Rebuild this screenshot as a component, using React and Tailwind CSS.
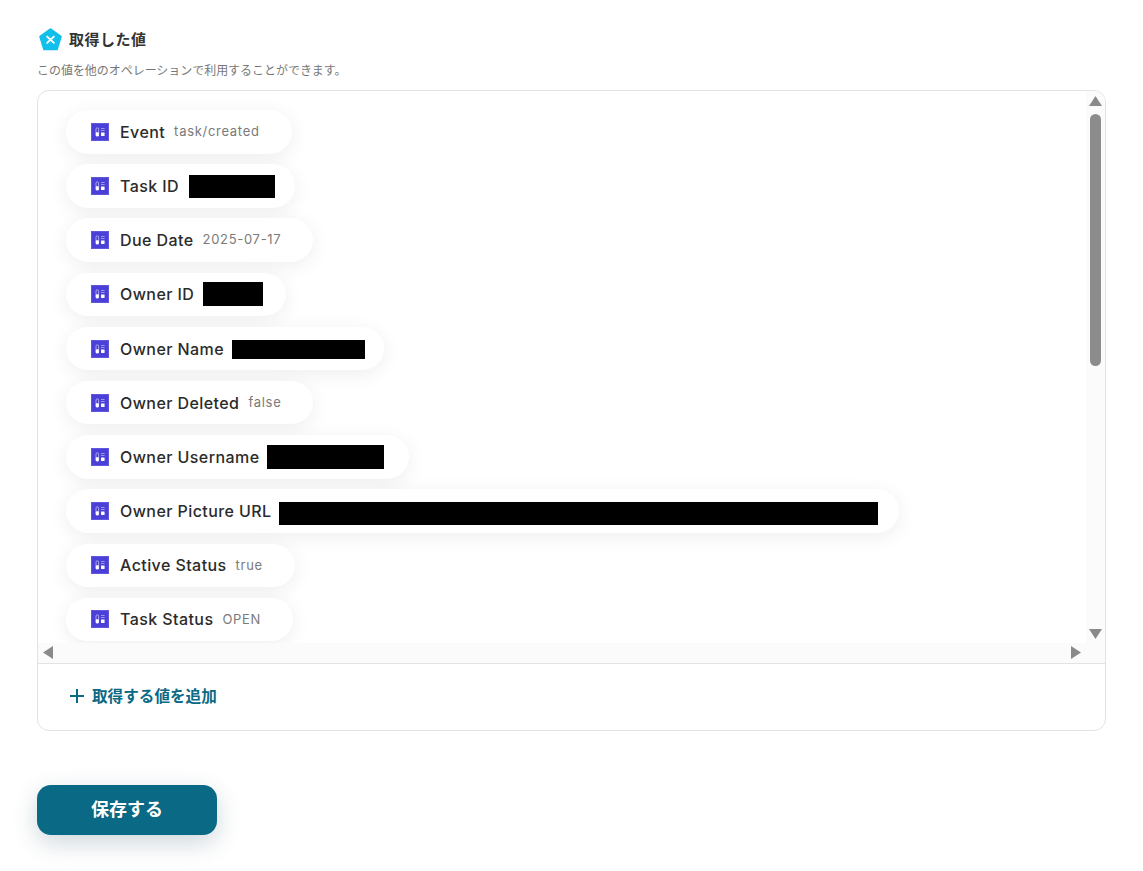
import React from 'react';

const rows = [
  { label: 'Event', value: 'task/created' },
  { label: 'Task ID', box: 'h-[23px] w-[86px] ml-[10px] mr-[20px] mt-[1px]' },
  { label: 'Due Date', value: '2025-07-17' },
  { label: 'Owner ID', box: 'h-[24px] w-[60px] ml-[9px] mr-[23px]' },
  { label: 'Owner Name', box: 'h-[19px] w-[133px] ml-[8px] mr-[19px] mt-[2px]' },
  { label: 'Owner Deleted', value: 'false' },
  { label: 'Owner Username', box: 'h-[24px] w-[117px] ml-[8px] mr-[25px]' },
  { label: 'Owner Picture URL', box: 'h-[23px] w-[599px] ml-[7px] mr-[21px] mt-[4px]' },
  { label: 'Active Status', value: 'true' },
  { label: 'Task Status', value: 'OPEN' },
];

// small indigo app icon used on every pill
function AppIcon() {
  return (
    <svg width="18" height="18" viewBox="0 0 18 18" className="shrink-0">
      <rect x="0.5" y="0.5" width="17" height="17" fill="#4A40D8" stroke="#6258E0" />
      <rect x="5" y="4.8" width="2.6" height="8.4" rx="1.3" fill="none" stroke="#fff" strokeWidth="0.7" opacity="0.7" />
      <rect x="4.8" y="9.2" width="3" height="4" rx="0.8" fill="#fff" />
      <rect x="10" y="5" width="3.6" height="0.9" fill="#fff" opacity="0.5" />
      <rect x="10" y="7" width="3.6" height="0.9" fill="#fff" opacity="0.5" />
      <rect x="10" y="9.4" width="3.6" height="3.6" rx="0.4" fill="#fff" />
    </svg>
  );
}

function Pill({ row }) {
  return (
    <div className="flex h-[43.5px] w-fit items-center rounded-full bg-white pl-[25px] shadow-[0_4px_20px_rgba(0,0,0,0.07)]">
      <AppIcon />
      <span className="ml-[11px] text-[16px] font-[550] tracking-[0.42px] text-[#2b2b2b]">{row.label}</span>
      {row.box ? (
        <span className={`bg-black ${row.box}`} />
      ) : (
        <span className="ml-[9px] mr-[32px] text-[13px] tracking-[0.7px] text-[#7a7a7a]">{row.value}</span>
      )}
    </div>
  );
}

function Arrow({ dir }) {
  const points = {
    up: '6.5,0 13,10 0,10',
    down: '0,0 13,0 6.5,10',
    left: '10,0 10,13 0,6.5',
    right: '0,0 10,6.5 0,13',
  };
  const size = dir === 'up' || dir === 'down' ? 'h-[10px] w-[13px]' : 'h-[13px] w-[10px]';
  const box = dir === 'up' || dir === 'down' ? '0 0 13 10' : '0 0 10 13';
  return (
    <svg viewBox={box} className={`${size} shrink-0`}>
      <polygon points={points[dir]} fill="#8a8a8a" />
    </svg>
  );
}

export default function App() {
  return (
    <div className="min-h-[871px] bg-white pl-[37px] pr-[37px] pt-[28px] font-['Inter','Noto_Sans_CJK_JP',sans-serif]">
      <div className="flex items-center">
        <svg width="23" height="23" viewBox="0 0 24 24" className="ml-[2px]">
          <path d="M12 1.5 L22.5 9 L18.5 22 L5.5 22 L1.5 9 Z" fill="#10BFEA" stroke="#10BFEA" strokeWidth="2.5" strokeLinejoin="round" />
          <path d="M8.5 9 L15.5 15.5 M15.5 9 L8.5 15.5" stroke="#fff" strokeWidth="2" strokeLinecap="round" />
        </svg>
        <h2 className="ml-[7px] pt-[1px] text-[15px] font-semibold tracking-[0.5px] text-[#333]">取得した値</h2>
      </div>
      <p className="mt-[10px] text-[12px] leading-[18px] tracking-[-0.04px] text-[#777]">
        この値を他のオペレーションで利用することができます。
      </p>

      <div className="mt-[10px] w-[1069px] overflow-hidden rounded-[12px] border border-[#e3e3e3]">
        <div className="border-b border-[#e3e3e3]">
          <div className="flex h-[552px]">
            <div className="flex-1 overflow-hidden pl-[28px] pt-[19.5px]">
              <div className="flex flex-col gap-[10.7px]">
                {rows.map((row) => (
                  <Pill key={row.label} row={row} />
                ))}
              </div>
            </div>
            <div className="flex w-[19px] flex-col items-center bg-[#fbfbfb] pt-[5px]">
              <Arrow dir="up" />
              <div className="mt-[8px] h-[252px] w-[11px] rounded-full bg-[#8c8c8c]" />
              <div className="mt-auto pb-[4px]">
                <Arrow dir="down" />
              </div>
            </div>
          </div>
          <div className="flex h-[20px] items-center justify-between bg-[#fbfbfb] pl-[5px] pr-[24px]">
            <Arrow dir="left" />
            <Arrow dir="right" />
          </div>
        </div>
        <div className="flex h-[66px] items-center pl-[31px]">
          <svg width="16" height="16" viewBox="0 0 16 16" className="-mt-[2px]">
            <path d="M8 1 V15 M1 8 H15" stroke="#0A6985" strokeWidth="2" />
          </svg>
          <span className="ml-[7px] pt-[1px] text-[15.6px] font-semibold text-[#0a6985]">取得する値を追加</span>
        </div>
      </div>

      <button
        type="button"
        className="mt-[54px] flex h-[50px] w-[180px] items-center justify-center rounded-[14px] bg-[#0a6985] text-[18px] font-bold text-white shadow-[0_8px_24px_rgba(10,60,80,0.2)]"
      >
        保存する
      </button>
    </div>
  );
}
